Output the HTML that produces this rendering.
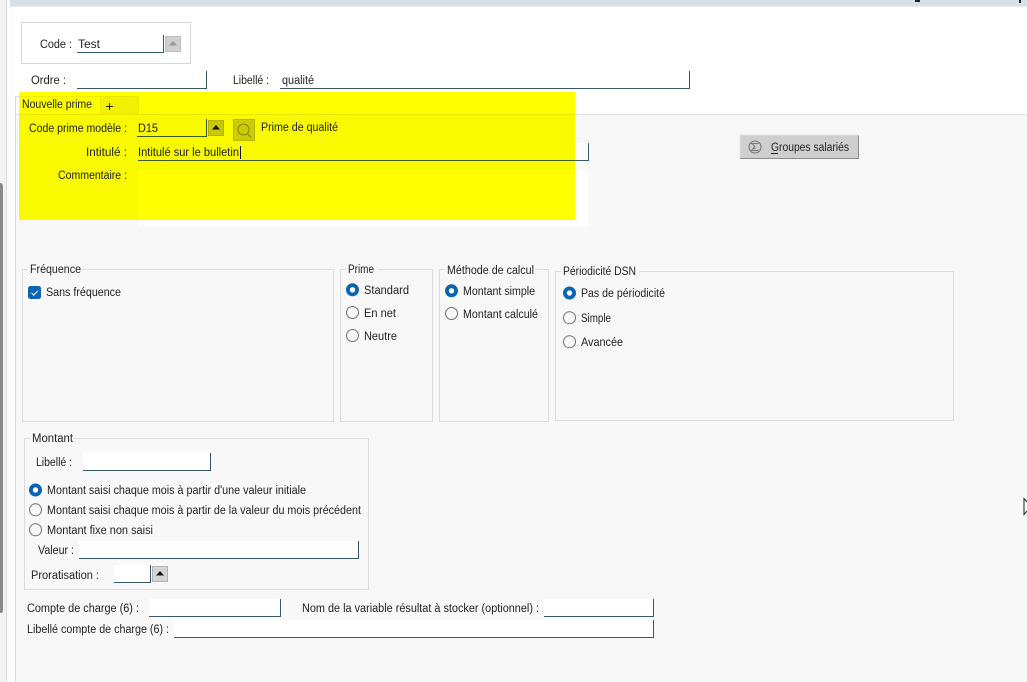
<!DOCTYPE html>
<html lang="fr"><head><meta charset="utf-8"><title>Nouvelle prime</title>
<style>
html,body{margin:0;padding:0;background:#fff;width:1027px;height:682px;overflow:hidden}
svg{display:block}
text{font-family:"Liberation Sans",sans-serif;font-size:11.5px;fill:#222}
</style></head><body>
<svg width="1027" height="682" viewBox="0 0 1027 682" xmlns="http://www.w3.org/2000/svg">
<rect width="1027" height="682" fill="#fff"/>
<!-- left chrome -->
<rect x="0" y="0" width="6" height="682" fill="#f3f3f3"/>
<rect x="6" y="0" width="1" height="682" fill="#dcdcdc"/>
<rect x="7" y="0" width="8" height="682" fill="#fdfdfd"/>
<path d="M0 183 L1 183 Q3 184 3 187 L3 610 Q3 613 1 613 L0 613Z" fill="#8a8a8a"/>
<!-- top bar -->
<rect x="10" y="0" width="1017" height="6" fill="#d6e0e6"/>
<rect x="10" y="6" width="1017" height="1" fill="#e6ebee"/>
<rect x="915" y="0" width="5" height="2" fill="#222"/><rect x="1019" y="0" width="2" height="3" fill="#222"/>
<!-- main -->
<rect x="15" y="114" width="1012" height="568" fill="#f8f8f8"/>
<rect x="15" y="114" width="1012" height="1" fill="#e2e2e2"/>
<rect x="15" y="96" width="1" height="586" fill="#dddddd"/>
<rect x="15" y="96" width="4" height="1" fill="#dddddd"/>
<!-- Code box -->
<rect x="21.500" y="22.500" width="169" height="41" fill="#fff" stroke="#d8d8d8"/>
<text x="40" y="48" textLength="32" lengthAdjust="spacingAndGlyphs">Code :</text>
<text x="78" y="48" textLength="22" lengthAdjust="spacingAndGlyphs">Test</text>
<path d="M77 52.500H163.500V35" fill="none" stroke="#36586c"/>
<rect x="165.500" y="36.500" width="15" height="15" fill="#cfcfcf" stroke="#bdbdbd"/>
<path d="M173 41l4 4.500h-8z" fill="#9a9a9a"/>
<text x="31" y="84" textLength="35" lengthAdjust="spacingAndGlyphs">Ordre :</text>
<path d="M77 88.500H206.500V71" fill="none" stroke="#36586c"/>
<text x="233" y="84" textLength="36" lengthAdjust="spacingAndGlyphs">Libellé :</text>
<text x="282" y="84" textLength="32" lengthAdjust="spacingAndGlyphs">qualité</text>
<path d="M280 88.500H689.500V71" fill="none" stroke="#36586c"/>
<!-- white field bg under highlight -->
<rect x="138" y="143" width="450" height="18" fill="#fff"/>
<rect x="138" y="170" width="450" height="56" fill="#fff"/>
<path d="M138 160.500H588.500V143" fill="none" stroke="#36586c"/>
<!-- yellow highlight -->
<rect x="19" y="92" width="556" height="128" fill="#ffff00"/>
<rect x="19" y="115" width="556" height="55" fill="#f9f900"/>
<rect x="19" y="170" width="119" height="50" fill="#f9f900"/>
<rect x="19" y="114" width="556" height="1" fill="#e8e800"/>
<path d="M19 96.500H100.500V114" fill="none" stroke="#eeee00"/>
<path d="M100.500 114V96.500H138.500V114Z" fill="#f2f200" stroke="#e8e800"/>
<text x="22" y="108" textLength="70" lengthAdjust="spacingAndGlyphs">Nouvelle prime</text>
<path d="M106 106.500h7M109.500 103v7" stroke="#222200" stroke-width="1"/>
<text x="29" y="132" textLength="98" lengthAdjust="spacingAndGlyphs">Code prime modèle :</text>
<text x="138" y="132" textLength="20" lengthAdjust="spacingAndGlyphs">D15</text>
<path d="M137 136.500H206.500V119" fill="none" stroke="#3d5a30"/>
<rect x="208.500" y="120.500" width="15" height="15" fill="#c8c800" stroke="#b0b000"/>
<path d="M216 125l4 4.500h-8z" fill="#111"/>
<rect x="233.500" y="119.500" width="21" height="21" fill="#cccc00" stroke="#b8b800"/>
<circle cx="243.500" cy="129.500" r="5.500" fill="none" stroke="#86861a" stroke-width="1.100"/>
<path d="M247.500 133.500l3.500 4" stroke="#86861a" stroke-width="1.200"/>
<text x="261" y="131" textLength="77" lengthAdjust="spacingAndGlyphs">Prime de qualité</text>
<text x="86" y="156" textLength="41" lengthAdjust="spacingAndGlyphs">Intitulé :</text>
<text x="138" y="156" textLength="101" lengthAdjust="spacingAndGlyphs">Intitulé sur le bulletin</text>
<rect x="240" y="146" width="1" height="13" fill="#111"/>
<path d="M138 160.500H575" fill="none" stroke="#3d5a30"/>
<text x="58" y="179" textLength="69" lengthAdjust="spacingAndGlyphs">Commentaire :</text>
<!-- Groupes salariés -->
<rect x="740" y="135" width="119" height="24" fill="#cfcfcf"/>
<path d="M740 158.500H858.500V135" fill="none" stroke="#8c8c8c"/>
<path d="M740 135H859M740 135V158" fill="none" stroke="#e4e4e4"/>
<circle cx="755" cy="147" r="6" fill="none" stroke="#777" stroke-width="1.100"/>
<path d="M751 143.500h7.500M752 143.500l3 3 -2.500 2.500 3-.5M751 150.500h7.500" fill="none" stroke="#777" stroke-width=".9"/>
<text x="771" y="151" textLength="78" lengthAdjust="spacingAndGlyphs">Groupes salariés</text>
<rect x="771" y="153" width="7" height="1" fill="#222"/>
<!-- group boxes -->
<g fill="none" stroke="#dcdcdc">
<rect x="22.500" y="269.500" width="311" height="152"/>
<rect x="340.500" y="269.500" width="92" height="152"/>
<rect x="439.500" y="269.500" width="109" height="152"/>
<rect x="555.500" y="271.500" width="398" height="149"/>
<rect x="24.500" y="438.500" width="344" height="151"/>
</g>
<g fill="#f8f8f8">
<rect x="28" y="266" width="54" height="8"/><rect x="346" y="266" width="32" height="8"/>
<rect x="445" y="266" width="90" height="8"/><rect x="561" y="268" width="78" height="8"/>
<rect x="30" y="435" width="44" height="8"/>
</g>
<text x="30" y="273" textLength="51" lengthAdjust="spacingAndGlyphs">Fréquence</text>
<text x="348" y="273" textLength="26" lengthAdjust="spacingAndGlyphs">Prime</text>
<text x="447" y="274" textLength="87" lengthAdjust="spacingAndGlyphs">Méthode de calcul</text>
<text x="563" y="275" textLength="73" lengthAdjust="spacingAndGlyphs">Périodicité DSN</text>
<text x="32" y="442" textLength="41" lengthAdjust="spacingAndGlyphs">Montant</text>
<!-- checkbox -->
<rect x="28" y="286" width="13" height="13" rx="2.500" fill="#0a64b4"/>
<path d="M31.500 292.800l2.300 2.300 4-4.300" fill="none" stroke="#fff" stroke-width="1"/>
<text x="46" y="296" textLength="75" lengthAdjust="spacingAndGlyphs">Sans fréquence</text>
<!-- radios -->
<g fill="#fff" stroke="#0a64b4" stroke-width="3.800">
<circle cx="352.500" cy="289.800" r="4.600"/><circle cx="451.500" cy="290.800" r="4.600"/>
<circle cx="569.500" cy="293" r="4.600"/><circle cx="35.500" cy="490" r="4.600"/>
</g>
<g fill="#f8f8f8" stroke="#6e6e6e" stroke-width="1">
<circle cx="352.500" cy="312.500" r="6"/><circle cx="352.500" cy="335.500" r="6"/>
<circle cx="451.500" cy="313.500" r="6"/><circle cx="569.500" cy="317.800" r="6"/>
<circle cx="569.500" cy="341.800" r="6"/><circle cx="35.500" cy="509.800" r="6"/>
<circle cx="35.500" cy="529.800" r="6"/>
</g>
<text x="364" y="294" textLength="45" lengthAdjust="spacingAndGlyphs">Standard</text>
<text x="364" y="317" textLength="32" lengthAdjust="spacingAndGlyphs">En net</text>
<text x="364" y="340" textLength="33" lengthAdjust="spacingAndGlyphs">Neutre</text>
<text x="463" y="295" textLength="72" lengthAdjust="spacingAndGlyphs">Montant simple</text>
<text x="463" y="318" textLength="75" lengthAdjust="spacingAndGlyphs">Montant calculé</text>
<text x="581" y="297" textLength="84" lengthAdjust="spacingAndGlyphs">Pas de périodicité</text>
<text x="581" y="322" textLength="30" lengthAdjust="spacingAndGlyphs">Simple</text>
<text x="581" y="346" textLength="42" lengthAdjust="spacingAndGlyphs">Avancée</text>
<!-- Montant -->
<text x="36" y="466" textLength="36" lengthAdjust="spacingAndGlyphs">Libellé :</text>
<rect x="83" y="453" width="128" height="18" fill="#fff"/>
<path d="M83 470.500H210.500V453" fill="none" stroke="#36586c"/>
<text x="47" y="494" textLength="259" lengthAdjust="spacingAndGlyphs">Montant saisi chaque mois à partir d'une valeur initiale</text>
<text x="47" y="514" textLength="314" lengthAdjust="spacingAndGlyphs">Montant saisi chaque mois à partir de la valeur du mois précédent</text>
<text x="47" y="534" textLength="106" lengthAdjust="spacingAndGlyphs">Montant fixe non saisi</text>
<text x="38" y="554" textLength="36" lengthAdjust="spacingAndGlyphs">Valeur :</text>
<rect x="79" y="541" width="280" height="18" fill="#fff"/>
<path d="M79 558.500H358.500V541" fill="none" stroke="#36586c"/>
<text x="31" y="579" textLength="68" lengthAdjust="spacingAndGlyphs">Proratisation :</text>
<rect x="114" y="565" width="37" height="18" fill="#fff"/>
<path d="M114 582.500H150.500V565" fill="none" stroke="#36586c"/>
<rect x="152.500" y="566.500" width="15" height="15" fill="#d4d4d4" stroke="#b4b4b4"/>
<path d="M160 571l4 4.500h-8z" fill="#111"/>
<!-- bottom -->
<text x="27" y="612" textLength="112" lengthAdjust="spacingAndGlyphs">Compte de charge (6) :</text>
<rect x="149" y="599" width="132" height="18" fill="#fff"/>
<path d="M149 616.500H280.500V599" fill="none" stroke="#36586c"/>
<text x="302" y="612" textLength="237" lengthAdjust="spacingAndGlyphs">Nom de la variable résultat à stocker (optionnel) :</text>
<rect x="544" y="599" width="110" height="18" fill="#fff"/>
<path d="M544 616.500H653.500V599" fill="none" stroke="#36586c"/>
<text x="27" y="633" textLength="142" lengthAdjust="spacingAndGlyphs">Libellé compte de charge (6) :</text>
<rect x="174" y="620" width="480" height="18" fill="#fff"/>
<path d="M174 637.500H653.500V620" fill="none" stroke="#36586c"/>
<!-- cursor -->
<path d="M1027 502 L1024 498.500V514.500L1027 511" fill="#fff" stroke="#222" stroke-width="1"/>
</svg>
</body></html>
